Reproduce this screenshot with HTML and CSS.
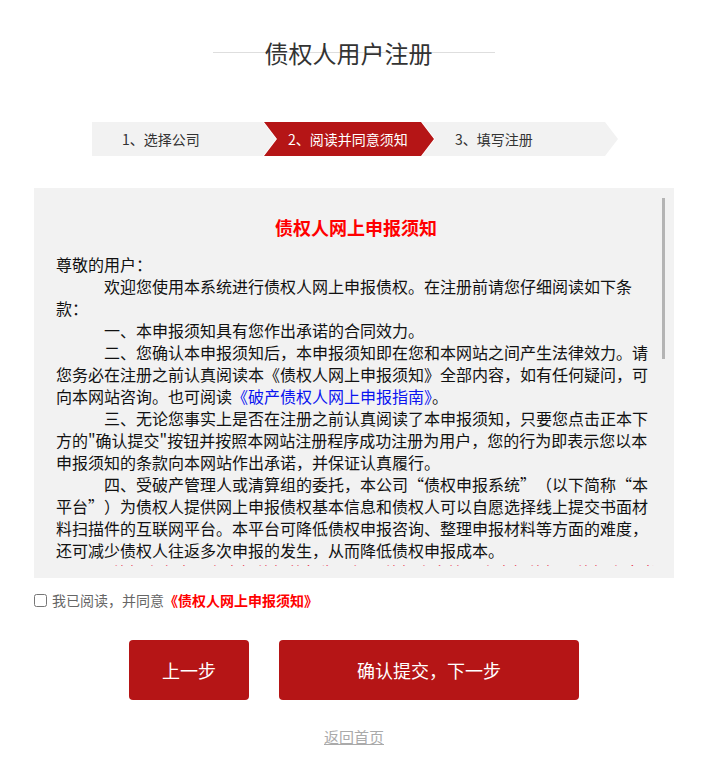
FILE: index.html
```html
<!DOCTYPE html>
<html lang="zh-CN">

<head>
    <meta charset="UTF-8">
    <meta name="viewport" content="width=device-width, initial-scale=1.0">
    <title>债权人用户注册</title>
    <link rel="stylesheet" href="styles.css">
</head>

<body>

    <div class="wrap">
        <h1 class="title">债权人用户注册</h1>

        <!-- step bar -->
        <div class="steps">
            <div class="step step-1">1、选择公司</div>
            <div class="step step-2 active">2、阅读并同意须知</div>
            <div class="step step-3">3、填写注册</div>
        </div>

        <div class="notice">
            <div class="notice-body">
                <h2>债权人网上申报须知</h2>
                <p>尊敬的用户：</p>
                <p class="ind">欢迎您使用本系统进行债权人网上申报债权。在注册前请您仔细阅读如下条款：</p>
                <p class="ind">一、本申报须知具有您作出承诺的合同效力。</p>
                <p class="ind">二、您确认本申报须知后，本申报须知即在您和本网站之间产生法律效力。请您务必在注册之前认真阅读本《债权人网上申报须知》全部内容，如有任何疑问，可向本网站咨询。也可阅读<a href="#">《破产债权人网上申报指南》</a>。</p>
                <p class="ind">三、无论您事实上是否在注册之前认真阅读了本申报须知，只要您点击正本下方的"确认提交"按钮并按照本网站注册程序成功注册为用户，您的行为即表示您以本申报须知的条款向本网站作出承诺，并保证认真履行。</p>
                <p class="ind">四、受破产管理人或清算组的委托，本公司<span class="lq">“</span>债权申报系统<span class="rq">”</span>（以下简称<span class="lq">“</span>本平台<span class="rq">”</span>）为债权人提供网上申报债权基本信息和债权人可以自愿选择线上提交书面材料扫描件的互联网平台。本平台可降低债权申报咨询、整理申报材料等方面的难度，还可减少债权人往返多次申报的发生，从而降低债权申报成本。</p>
                <p class="ind red">五、债权人在本平台申报债权的行为，视同债权人向管理人申报债权，债权人应当保证所提交的全部申报材料真实、准确、完整，并承担相应的法律责任。</p>
                <p class="ind">六、债权人通过本平台提交的申报信息及材料扫描件，仅作为管理人审查债权的参考依据，债权人仍应按照管理人的要求，在规定期限内向管理人提交书面申报材料原件。</p>
                <p class="ind">七、债权人应妥善保管本平台的用户名及密码，因债权人自身原因导致用户名及密码泄露而造成的损失，由债权人自行承担。</p>
                <p class="ind">八、本平台仅提供债权申报信息的收集与传递服务，不对债权的真实性、合法性作出任何判断，债权的审查与确认由管理人依法进行。</p>
                <p class="ind">九、本申报须知的解释权归本网站所有。如您对本申报须知有任何异议，请停止注册并与管理人联系。</p>
            </div>
        </div>

        <div class="agree">
            <input type="checkbox" id="agree">
            <label for="agree">我已阅读，并同意<b>《债权人网上申报须知》</b></label>
        </div>

        <div class="btns">
            <button class="btn btn-prev">上一步</button>
            <button class="btn btn-next">确认提交，下一步</button>
        </div>

        <div class="back">
            <a href="#">返回首页</a>
        </div>
    </div>

</body>

</html>
```

FILE: styles.css
```css
* {
    margin: 0;
    padding: 0;
    box-sizing: border-box;
}

body {
    background-color: #fff;
    color: #222;
    font-family: "Noto Sans CJK SC", sans-serif;
}

.wrap {
    width: 640px;
    margin-left: 34px;
}

/* title with the thin line behind it */
.title {
    margin-top: 37px;
    padding-right: 11px;
    font-size: 24px;
    line-height: 32px;
    font-weight: normal;
    color: #333;
    text-align: center;
    background: linear-gradient(#dedede, #dedede) no-repeat center 15px / 282px 1px;
}

/* steps */
.steps {
    display: flex;
    margin-top: 53px;
    margin-left: 58px;
}

.step {
    height: 34px;
    line-height: 34px;
    font-size: 14px;
    color: #333;
    background-color: #f2f2f2;
    clip-path: polygon(0 0, calc(100% - 13px) 0, 100% 50%, calc(100% - 13px) 100%, 0 100%, 13px 50%);
}

.step-1 {
    width: 184px;
    padding-left: 30px;
    clip-path: polygon(0 0, calc(100% - 13px) 0, 100% 50%, calc(100% - 13px) 100%, 0 100%);
}

.step-2 {
    width: 170px;
    margin-left: -12px;
    padding-left: 24px;
}

.step-3 {
    width: 196px;
    margin-left: -12px;
    padding-left: 33px;
}

.step.active {
    background-color: #b51516;
    color: #fff;
}

/* notice box */
.notice {
    position: relative;
    margin-top: 32px;
    background-color: #f2f2f2;
    padding: 10px 12px 12px 22px;
}

/* thin scroll thumb drawn over the box */
.notice::after {
    content: "";
    position: absolute;
    top: 10px;
    right: 9px;
    width: 3px;
    height: 161px;
    background-color: #b4b4b4;
}

.notice-body {
    height: 368px;
    overflow-y: auto;
    scrollbar-width: none;
    padding-right: 6px;
    font-size: 16px;
    line-height: 22px;
    color: #111;
}

.notice-body h2 {
    margin: 17px 0 14px;
    font-size: 18px;
    line-height: 24px;
    color: #f00;
    text-align: center;
}

.notice-body .ind {
    text-indent: 3em;
}

.notice-body .red {
    color: #e8203a;
    text-indent: 1.5em;
}

/* full width quote marks in 四 */
.lq,
.rq {
    display: inline-block;
    width: 1em;
    text-indent: 0;
}

.lq {
    text-align: right;
}

.rq {
    text-align: left;
}

.notice-body a {
    color: #0a14f0;
    text-decoration: none;
}

/* agree line */
.agree {
    margin-top: 12px;
    display: flex;
    align-items: center;
    height: 20px;
    font-size: 14px;
    color: #666;
}

.agree input {
    width: 13px;
    height: 13px;
    margin: 0 5px 0 0;
}

.agree b {
    color: #f00;
}

/* buttons */
.btns {
    margin-top: 30px;
    display: flex;
    justify-content: center;
    gap: 30px;
}

.btn {
    height: 60px;
    border: none;
    border-radius: 4px;
    background-color: #b51516;
    color: #fff;
    font-family: "Noto Sans CJK SC", sans-serif;
    font-size: 18px;
    cursor: pointer;
}

.btn-prev {
    width: 120px;
}

.btn-next {
    width: 300px;
}

.back {
    margin-top: 27px;
    text-align: center;
    font-size: 15px;
    line-height: 20px;
}

.back a {
    color: #aaa;
}
```
